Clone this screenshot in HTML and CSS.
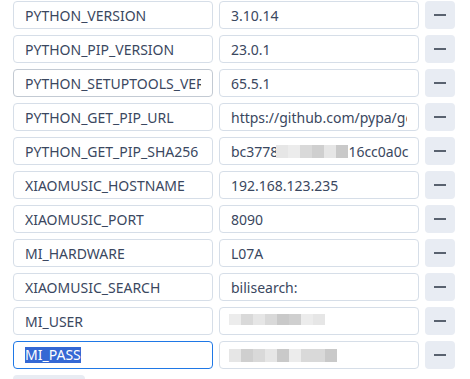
FILE: index.html
```html
<!DOCTYPE html>
<html>
<head>
    <meta charset="utf-8" />
    <title>env</title>
    <link rel="stylesheet" href="styles.css">
</head>
<body>
    <div class="envlist">
        <div class="envrow">
            <input class="mezo" type="text" value="PYTHON_VERSION" />
            <input class="mezo" type="text" value="3.10.14" />
            <button class="minusz"><span></span></button>
        </div>
        <div class="envrow">
            <input class="mezo" type="text" value="PYTHON_PIP_VERSION" />
            <input class="mezo" type="text" value="23.0.1" />
            <button class="minusz"><span></span></button>
        </div>
        <div class="envrow">
            <input class="mezo sotet" type="text" value="PYTHON_SETUPTOOLS_VERSION" />
            <input class="mezo" type="text" value="65.5.1" />
            <button class="minusz"><span></span></button>
        </div>
        <div class="envrow">
            <input class="mezo" type="text" value="PYTHON_GET_PIP_URL" />
            <input class="mezo" type="text" value="https://github.com/pypa/get-pip/raw/main/public/get-pip.py" />
            <button class="minusz"><span></span></button>
        </div>
        <div class="envrow">
            <input class="mezo" type="text" value="PYTHON_GET_PIP_SHA256" />
            <div class="mezo rejtett">bc3778<span class="folt f1"></span><span class="folt f5"></span><span class="folt f2"></span><span class="folt f3"></span><span class="folt f1"></span><span class="folt f4"></span>16cc0a0c</div>
            <button class="minusz"><span></span></button>
        </div>
        <div class="envrow">
            <input class="mezo" type="text" value="XIAOMUSIC_HOSTNAME" />
            <input class="mezo" type="text" value="192.168.123.235" />
            <button class="minusz"><span></span></button>
        </div>
        <div class="envrow">
            <input class="mezo" type="text" value="XIAOMUSIC_PORT" />
            <input class="mezo" type="text" value="8090" />
            <button class="minusz"><span></span></button>
        </div>
        <div class="envrow">
            <input class="mezo" type="text" value="MI_HARDWARE" />
            <input class="mezo" type="text" value="L07A" />
            <button class="minusz"><span></span></button>
        </div>
        <div class="envrow">
            <input class="mezo" type="text" value="XIAOMUSIC_SEARCH" />
            <input class="mezo" type="text" value="bilisearch:" />
            <button class="minusz"><span></span></button>
        </div>
        <div class="envrow">
            <input class="mezo" type="text" value="MI_USER" />
            <div class="mezo rejtett felso"><span class="folt f5"></span><span class="folt f2"></span><span class="folt f1"></span><span class="folt f2"></span><span class="folt f4"></span><span class="folt f3"></span><span class="folt f5"></span><span class="folt f1"></span></div>
            <button class="minusz"><span></span></button>
        </div>
        <div class="envrow">
            <div class="mezo aktiv"><span class="kijelolt">MI_PASS</span></div>
            <div class="mezo rejtett"><span class="folt f1"></span><span class="folt f3"></span><span class="folt f2"></span><span class="folt f1"></span><span class="folt f4"></span><span class="folt f5"></span><span class="folt f2"></span><span class="folt f2"></span><span class="folt f4"></span></div>
            <button class="minusz"><span></span></button>
        </div>
        <div class="hozzaad"></div>
    </div>
</body>
</html>
```
FILE: styles.css
```css
* {
    box-sizing: border-box;
}

html {
    background-color: #ffffff;
}

body {
    margin: 0;
    font-family: 'Noto Sans', 'Liberation Sans', sans-serif;
    font-size: 14px;
    color: #3a4760;
}

.envlist {
    display: flex;
    flex-direction: column;
    gap: 6px;
    padding: 1px 0 0 13px;
}

.envrow {
    display: grid;
    grid-template-columns: 200px 200px 30px;
    column-gap: 6px;
    height: 28px;
}

.mezo {
    height: 28px;
    padding: 0 11px;
    border: 1px solid #d6dee8;
    border-radius: 4px;
    font-family: inherit;
    font-size: 14px;
    color: #3a4760;
    background-color: #ffffff;
    outline: none;
    white-space: nowrap;
    overflow: hidden;
}

.sotet {
    border-color: #c3cad3;
}

div.mezo {
    display: flex;
    align-items: center;
}

.aktiv {
    border-color: #1f78e6;
}

.kijelolt {
    background-color: #3568d4;
    color: #ffffff;
    line-height: 16px;
}

.folt {
    display: inline-block;
    flex: none;
    width: 12px;
    height: 13px;
    background-color: #dcdcdc;
}

.rejtett .folt:first-child {
    margin-left: -2px;
}

.f1 { background-color: #e6e6e6; }
.f2 { background-color: #d9d9d9; }
.f3 { background-color: #cfcfcf; }
.f4 { background-color: #c9c9c9; }
.f5 { background-color: #ececec; }

.felso .folt {
    height: 11px;
    margin-top: -4px;
}

.minusz {
    height: 28px;
    border: none;
    border-radius: 4px;
    background-color: #e8ecf3;
    display: flex;
    align-items: center;
    justify-content: center;
    padding: 0;
    cursor: pointer;
}

.minusz span {
    width: 12px;
    height: 2px;
    background-color: #59626f;
}

.hozzaad {
    width: 72px;
    height: 20px;
    border-radius: 4px;
    background-color: #e8ecf3;
}
```
